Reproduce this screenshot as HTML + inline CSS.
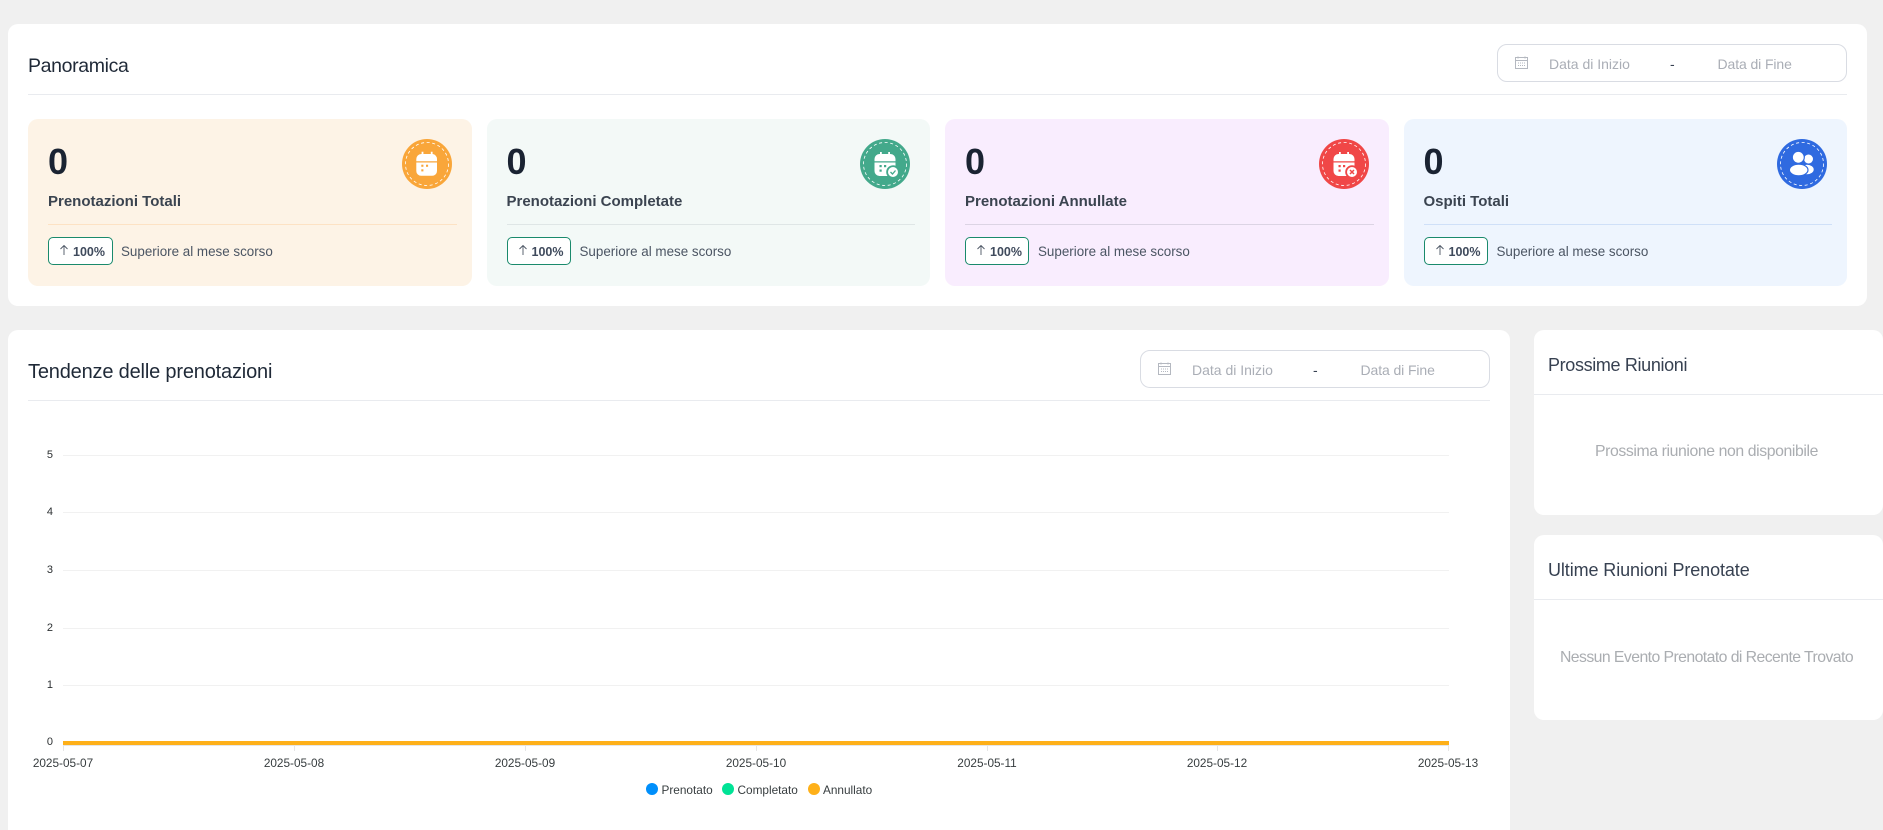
<!DOCTYPE html>
<html lang="it">
<head>
<meta charset="utf-8">
<title>Panoramica</title>
<style>
*{box-sizing:border-box;margin:0;padding:0}
html,body{width:1883px;height:830px;overflow:hidden;background:#f0f0f0;font-family:"Liberation Sans",Arial,sans-serif}
body{position:relative}
.a{position:absolute}
.t{position:absolute;white-space:nowrap;line-height:20px}
.panel{position:absolute;background:#fff;border-radius:10px}
.hr{position:absolute;height:1px;background:#e9ebef}
.title{font-size:20px;color:#1f2937}
.sub{font-size:18px;color:#374151}
.empty{font-size:15.8px;color:#aaadb1;text-align:center}
.date{position:absolute;width:350px;height:38px;border:1px solid #d9dce3;border-radius:10px;background:#fff}
.date .t{font-size:14px;top:9px;color:#aaaeb6}
.date .d{color:#374151}
.date svg{position:absolute;left:17px;top:11px}
.card{position:absolute;top:119px;width:443.5px;height:167px;border-radius:10px}
.num{position:absolute;left:20px;top:23px;font-size:36px;line-height:40px;font-weight:700;color:#1a2332}
.lab{position:absolute;left:20px;top:73px;line-height:20px;font-size:15px;font-weight:700;color:#3b4450;white-space:nowrap}
.div{position:absolute;left:20px;right:15px;top:105px;height:1px}
.badge{position:absolute;left:20px;top:118px;width:65px;height:28px;background:#fff;border:1px solid #1a8a6c;border-radius:5px}
.badge svg{position:absolute;left:10px;top:6px}
.badge b{position:absolute;left:24px;top:3.5px;font-size:12.5px;line-height:20px;color:#3f4a5c}
.sup{position:absolute;left:93px;top:123px;font-size:13.4px;line-height:20px;color:#4b5563;white-space:nowrap}
.ico{position:absolute;right:20px;top:20px;width:50px;height:50px}
.gl{position:absolute;left:63px;width:1386px;height:1px;background:#f1f1f1}
.tick{position:absolute;top:745px;width:1px;height:6px;background:#e6e6e6}
.xl{position:absolute;top:753px;width:80px;text-align:center;font-size:11.8px;line-height:20px;color:#373d3f}
.yl{position:absolute;left:20px;width:33px;text-align:right;font-size:11px;line-height:20px;color:#2c3032}
.lg{position:absolute;top:780px;font-size:11.8px;line-height:20px;color:#373d3f}
.dot{position:absolute;top:783px;width:12px;height:12px;border-radius:50%}
</style>
</head>
<body>

<div class="panel" style="left:8px;top:24px;width:1859px;height:282px"></div>
<div class="t title" style="left:28px;top:56px;font-size:19.500px;letter-spacing:-.35px">Panoramica</div>
<div class="hr" style="left:28px;top:94px;width:1819px"></div>

<div class="date" style="left:1497px;top:44px">
<svg width="13" height="13" viewBox="0 0 13 13" fill="none" stroke="#b4b8c0" stroke-width="1"><rect x=".5" y="1.500" width="12" height="11"/><path d="M.5 4.500h12M3 .5v2M10 .5v2"/><path d="M3 7h7M3 9.500h7" stroke-dasharray="1 1"/></svg>
<div class="t" style="left:51px">Data di Inizio</div><div class="t d" style="left:172px">-</div><div class="t" style="left:219.500px;letter-spacing:-.1px">Data di Fine</div>
</div>

<div class="card" style="left:28px;background:#fdf3e6">
<div class="num">0</div><div class="lab">Prenotazioni Totali</div><div class="div" style="background:#fde2c4"></div>
<div class="badge"><svg width="10" height="12" viewBox="0 0 10 12" fill="none" stroke="#4b5563" stroke-width=".9"><path d="M5 11V1.500M1.500 5L5 1.500 8.500 5"/></svg><b>100%</b></div>
<div class="sup">Superiore al mese scorso</div>
<svg class="ico" viewBox="0 0 50 50"><circle cx="25" cy="25" r="25" fill="#f9a63a"/><circle cx="25" cy="25" r="21.500" fill="none" stroke="#fff" stroke-width=".8" stroke-dasharray="3 2.600"/>
<path d="M14.300 23.500H35V32a4.700 4.700 0 0 1-4.700 4.700H19a4.700 4.700 0 0 1-4.700-4.700z" fill="#fff"/><path d="M14.300 22.300V20a5 5 0 0 1 5-5h.300v-2.300h1.800V15h7.400v-2.300h1.800V15h.100a5 5 0 0 1 4.300 5v2.300z" fill="#fff"/>
<g fill="#f9a63a"><rect x="19.300" y="25.700" width="2.100" height="2.100"/><rect x="24" y="25.700" width="2.100" height="2.100"/><rect x="19.300" y="30.300" width="2.100" height="2.100"/></g></svg>
</div>

<div class="card" style="left:486.500px;background:#f3f9f7">
<div class="num">0</div><div class="lab">Prenotazioni Completate</div><div class="div" style="background:#dfe6e6"></div>
<div class="badge" style="width:64px"><svg width="10" height="12" viewBox="0 0 10 12" fill="none" stroke="#4b5563" stroke-width=".9"><path d="M5 11V1.500M1.500 5L5 1.500 8.500 5"/></svg><b>100%</b></div>
<div class="sup">Superiore al mese scorso</div>
<svg class="ico" viewBox="0 0 50 50"><circle cx="25" cy="25" r="25" fill="#43a98b"/><circle cx="25" cy="25" r="21.500" fill="none" stroke="#fff" stroke-width=".8" stroke-dasharray="3 2.600"/>
<path d="M14.500 23.500h21V32a5 5 0 0 1-5 5h-11a5 5 0 0 1-5-5z" fill="#fff"/><path d="M14.500 22.300V20a5 5 0 0 1 5-5h.500v-2h1.800v2h6.400v-2h1.800v2h.500a5 5 0 0 1 5 5v2.300z" fill="#fff"/>
<g fill="#43a98b"><rect x="19.500" y="26" width="2.200" height="2.200"/><rect x="24" y="26" width="2.200" height="2.200"/><rect x="19.500" y="30.500" width="2.200" height="2.200"/></g>
<circle cx="33" cy="33" r="6.800" fill="#43a98b"/><circle cx="33" cy="33" r="5" fill="#fff"/><path d="M30.500 33l2 2 3-3.500" fill="none" stroke="#43a98b" stroke-width="1.300"/></svg>
</div>

<div class="card" style="left:945px;background:#f9edfe">
<div class="num">0</div><div class="lab">Prenotazioni Annullate</div><div class="div" style="background:#dcd4e4"></div>
<div class="badge" style="width:64px"><svg width="10" height="12" viewBox="0 0 10 12" fill="none" stroke="#4b5563" stroke-width=".9"><path d="M5 11V1.500M1.500 5L5 1.500 8.500 5"/></svg><b>100%</b></div>
<div class="sup">Superiore al mese scorso</div>
<svg class="ico" viewBox="0 0 50 50"><circle cx="25" cy="25" r="25" fill="#f04747"/><circle cx="25" cy="25" r="21.500" fill="none" stroke="#fff" stroke-width=".8" stroke-dasharray="3 2.600"/>
<path d="M14.500 23.500h21V32a5 5 0 0 1-5 5h-11a5 5 0 0 1-5-5z" fill="#fff"/><path d="M14.500 22.300V20a5 5 0 0 1 5-5h.500v-2h1.800v2h6.400v-2h1.800v2h.500a5 5 0 0 1 5 5v2.300z" fill="#fff"/>
<g fill="#f04747"><rect x="19.500" y="26" width="2.200" height="2.200"/><rect x="24" y="26" width="2.200" height="2.200"/><rect x="19.500" y="30.500" width="2.200" height="2.200"/></g>
<circle cx="33" cy="33" r="6.800" fill="#f04747"/><circle cx="33" cy="33" r="5" fill="#fff"/><path d="M31 31l4 4M35 31l-4 4" fill="none" stroke="#f04747" stroke-width="1.500"/></svg>
</div>

<div class="card" style="left:1403.500px;background:#eef5fe">
<div class="num">0</div><div class="lab">Ospiti Totali</div><div class="div" style="background:#cfe0f8"></div>
<div class="badge" style="width:64px"><svg width="10" height="12" viewBox="0 0 10 12" fill="none" stroke="#4b5563" stroke-width=".9"><path d="M5 11V1.500M1.500 5L5 1.500 8.500 5"/></svg><b>100%</b></div>
<div class="sup">Superiore al mese scorso</div>
<svg class="ico" viewBox="0 0 50 50"><circle cx="25" cy="25" r="25" fill="#2f6ae0"/><circle cx="25" cy="25" r="21.500" fill="none" stroke="#fff" stroke-width=".8" stroke-dasharray="3 2.600"/>
<circle cx="31.500" cy="20" r="4.500" fill="#fff"/><circle cx="21.300" cy="18.300" r="6" fill="#fff" stroke="#2f6ae0" stroke-width="1.200"/>
<ellipse cx="30" cy="30.500" rx="6.700" ry="4.800" fill="#fff"/><ellipse cx="21.700" cy="31" rx="9.300" ry="5.800" fill="#fff" stroke="#2f6ae0" stroke-width="1.200"/></svg>
</div>

<div class="panel" style="left:8px;top:330px;width:1502px;height:520px"></div>
<div class="t title" style="left:28px;top:362px;letter-spacing:-.18px">Tendenze delle prenotazioni</div>
<div class="hr" style="left:28px;top:400px;width:1462px"></div>

<div class="date" style="left:1140px;top:350px">
<svg width="13" height="13" viewBox="0 0 13 13" fill="none" stroke="#b4b8c0" stroke-width="1"><rect x=".5" y="1.500" width="12" height="11"/><path d="M.5 4.500h12M3 .5v2M10 .5v2"/><path d="M3 7h7M3 9.500h7" stroke-dasharray="1 1"/></svg>
<div class="t" style="left:51px">Data di Inizio</div><div class="t d" style="left:172px">-</div><div class="t" style="left:219.500px;letter-spacing:-.1px">Data di Fine</div>
</div>

<div class="gl" style="top:455px"></div>
<div class="gl" style="top:512px"></div>
<div class="gl" style="top:570px"></div>
<div class="gl" style="top:628px"></div>
<div class="gl" style="top:685px"></div>
<div class="yl" style="top:445px">5</div>
<div class="yl" style="top:502px">4</div>
<div class="yl" style="top:560px">3</div>
<div class="yl" style="top:618px">2</div>
<div class="yl" style="top:675px">1</div>
<div class="yl" style="top:732px">0</div>
<div class="a" style="left:63px;top:745px;width:1386px;height:1px;background:#e6e6e6"></div>
<div class="tick" style="left:63px"></div>
<div class="tick" style="left:294px"></div>
<div class="tick" style="left:525px"></div>
<div class="tick" style="left:756px"></div>
<div class="tick" style="left:987px"></div>
<div class="tick" style="left:1217px"></div>
<div class="tick" style="left:1448px"></div>
<div class="a" style="left:63px;top:741px;width:1386px;height:4px;background:#feb019"></div>
<div class="xl" style="left:23px">2025-05-07</div>
<div class="xl" style="left:254px">2025-05-08</div>
<div class="xl" style="left:485px">2025-05-09</div>
<div class="xl" style="left:716px">2025-05-10</div>
<div class="xl" style="left:947px">2025-05-11</div>
<div class="xl" style="left:1177px">2025-05-12</div>
<div class="xl" style="left:1408px">2025-05-13</div>
<div class="dot" style="left:646px;background:#008ffb"></div><div class="lg" style="left:661.500px">Prenotato</div>
<div class="dot" style="left:722px;background:#00e396"></div><div class="lg" style="left:737.500px">Completato</div>
<div class="dot" style="left:808px;background:#feb019"></div><div class="lg" style="left:823px">Annullato</div>

<div class="panel" style="left:1534px;top:330px;width:349px;height:185px"></div>
<div class="t sub" style="left:1548px;top:355px;letter-spacing:-.35px">Prossime Riunioni</div>
<div class="hr" style="left:1534px;top:394px;width:349px"></div>
<div class="t empty" style="left:1534px;width:345px;top:442px;letter-spacing:-.4px">Prossima riunione non disponibile</div>

<div class="panel" style="left:1534px;top:535px;width:349px;height:185px"></div>
<div class="t sub" style="left:1548px;top:560px;letter-spacing:-.1px">Ultime Riunioni Prenotate</div>
<div class="hr" style="left:1534px;top:599px;width:349px"></div>
<div class="t empty" style="left:1534px;width:345px;top:648px;letter-spacing:-.57px">Nessun Evento Prenotato di Recente Trovato</div>

</body>
</html>
